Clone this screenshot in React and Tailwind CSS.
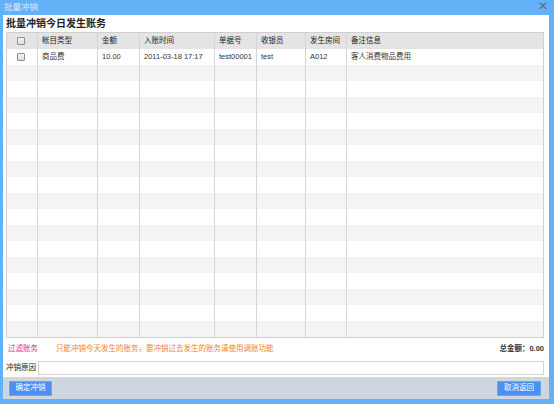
const COLS = [
  { key: 'chk', label: '', w: 31 },
  { key: 'type', label: '帐目类型', w: 60 },
  { key: 'amount', label: '金额', w: 42 },
  { key: 'time', label: '入账时间', w: 75 },
  { key: 'bill', label: '单据号', w: 42 },
  { key: 'cashier', label: '收银员', w: 49 },
  { key: 'room', label: '发生房间', w: 41 },
  { key: 'note', label: '备注信息', w: 0 },
];

const ROWS = [
  {
    type: '商品费',
    amount: '10.00',
    time: '2011-03-18 17:17',
    bill: 'test00001',
    cashier: 'test',
    room: 'A012',
    note: '客人消费物品费用',
  },
];

const TOTAL_ROWS = 18;

function Check() {
  return (
    <span className="block w-[8px] h-[8px] border border-[#8f8f8f] rounded-[1px] bg-gradient-to-b from-[#f4f4f4] to-[#dcdcdc]" />
  );
}

function Row({ data, index, header }) {
  const bg = header ? 'bg-[#e4e4e4]' : index % 2 === 1 ? 'bg-[#f4f4f4]' : 'bg-white';
  return (
    <div className={`flex h-[16px] ${bg} ${header ? 'text-[#222]' : ''}`}>
      {COLS.map((c, i) => (
        <div
          key={c.key}
          className={`flex items-center h-full ${i < COLS.length - 1 ? 'border-r border-[#d6d6d6]' : ''} ${
            c.w ? '' : 'flex-1'
          } ${c.key === 'chk' ? 'pl-[10px]' : 'pl-[4px]'}`}
          style={c.w ? { width: c.w } : undefined}
        >
          {c.key === 'chk'
            ? (header || data) && <Check />
            : header
            ? c.label
            : data && data[c.key]}
        </div>
      ))}
    </div>
  );
}

export default function App() {
  const rows = Array.from({ length: TOTAL_ROWS }, (_, i) => ROWS[i] || null);

  return (
    <div className="w-[554px] h-[404px] bg-[#63b1f8] flex flex-col font-['Liberation_Sans','Noto_Sans_CJK_SC',sans-serif] text-[7.5px] text-[#333]">
      {/* title bar */}
      <div className="h-[15px] flex items-center justify-between pl-[4px] pr-[6px]">
        <span className="text-[8.5px] text-[#dcedfd]">批量冲销</span>
        <span className="text-[#5b6b7c] text-[12px] leading-none -mt-[3px]">✕</span>
      </div>

      <div className="flex-1 flex flex-col ml-[3px] mr-[5px] mb-[5px]">
        <div className="flex-1 bg-white flex flex-col pl-[3px] pr-[5px]">
          <div className="h-[17px] flex items-center font-bold text-[10px] text-[#222]">
            批量冲销今日发生账务
          </div>

          <div className="border border-[#cfcfcf]">
            <Row header />
            {rows.map((r, i) => (
              <Row key={i} data={r} index={i} />
            ))}
          </div>

          <div className="mt-[2px] h-[18px] flex items-center">
            <span className="w-[50px] pl-[2px] text-[#f0287f]">过滤账务</span>
            <span className="text-[#f3841f]">只能冲销今天发生的账务，要冲销过去发生的账务请使用调账功能</span>
            <span className="ml-auto font-bold text-[#333]">总金额：0.00</span>
          </div>

          <div className="mt-[3px] h-[14px] flex items-center">
            <span className="w-[32px] text-[#222]">冲销原因</span>
            <div className="flex-1 h-[14px] border border-[#d4d4d4] bg-white" />
          </div>
          <div className="flex-1" />
        </div>

        <div className="h-[22px] bg-[#cfd6dd] flex items-center justify-between pl-[6px] pr-[8px]">
          <button className="h-[15px] w-[43px] bg-[#4d8ff0] border border-[#6aa6f6] text-white text-[7.5px] flex items-center justify-center">
            确定冲销
          </button>
          <button className="h-[15px] w-[44px] bg-[#4d8ff0] border border-[#6aa6f6] text-white text-[7.5px] flex items-center justify-center">
            取消返回
          </button>
        </div>
      </div>
    </div>
  );
}
